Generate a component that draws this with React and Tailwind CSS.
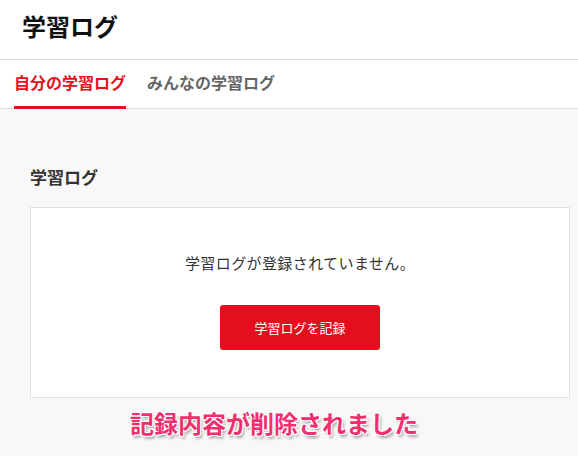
import React from "react";

const font = {
  fontFamily: '"Noto Sans CJK JP", "Noto Sans", sans-serif',
};

const App = () => {
  return (
    <div
      className="relative w-[578px] h-[456px] overflow-hidden bg-[#f8f8f8] text-[#222]"
      style={font}
    >
      <header className="h-[60px] bg-white border-b border-[#dddddd] flex items-center px-[22px]">
        <h1 className="text-[24px] font-bold text-[#111] leading-none -mt-[7px]">
          学習ログ
        </h1>
      </header>

      <nav className="h-[49px] bg-white border-b border-[#dddddd] flex items-stretch px-[14px] gap-[21px]">
        <button className="relative flex items-center text-[16px] font-bold text-[#e3101e] border-b-[3px] border-[#e3101e] -mb-px pb-[2px] leading-none">
          自分の学習ログ
        </button>
        <button className="flex items-center text-[16px] font-bold text-[#666666] pb-[5px] leading-none">
          みんなの学習ログ
        </button>
      </nav>

      <main className="pl-[30px] pr-[8px] pt-[62px]">
        <h2 className="text-[17px] font-bold text-[#333] leading-none mb-[22px] -mt-[3px]">
          学習ログ
        </h2>
        <div className="h-[191px] bg-white border border-[#e2e2e2] flex flex-col items-center pt-[45px]">
          <p className="text-[15px] text-[#333] leading-[20px] tracking-[0.4px]">
            学習ログが登録されていません。
          </p>
          <button className="mt-[32px] w-[160px] h-[45px] rounded-[3px] bg-[#e50e1e] text-white text-[13px] leading-none">
            学習ログを記録
          </button>
        </div>
      </main>

      <div
        className="absolute left-[130px] top-[408px] text-[24px] font-bold text-[#f0306e] leading-[30px]"
        style={{
          textShadow:
            "1px 1px 0 #fff, -1px -1px 0 #fff, 1px -1px 0 #fff, -1px 1px 0 #fff, 0 1px 0 #fff, 0 -1px 0 #fff, 1px 0 0 #fff, -1px 0 0 #fff, 2px 3px 3px rgba(0,0,0,0.35)",
        }}
      >
        記録内容が削除されました
      </div>
    </div>
  );
};

export default App;
